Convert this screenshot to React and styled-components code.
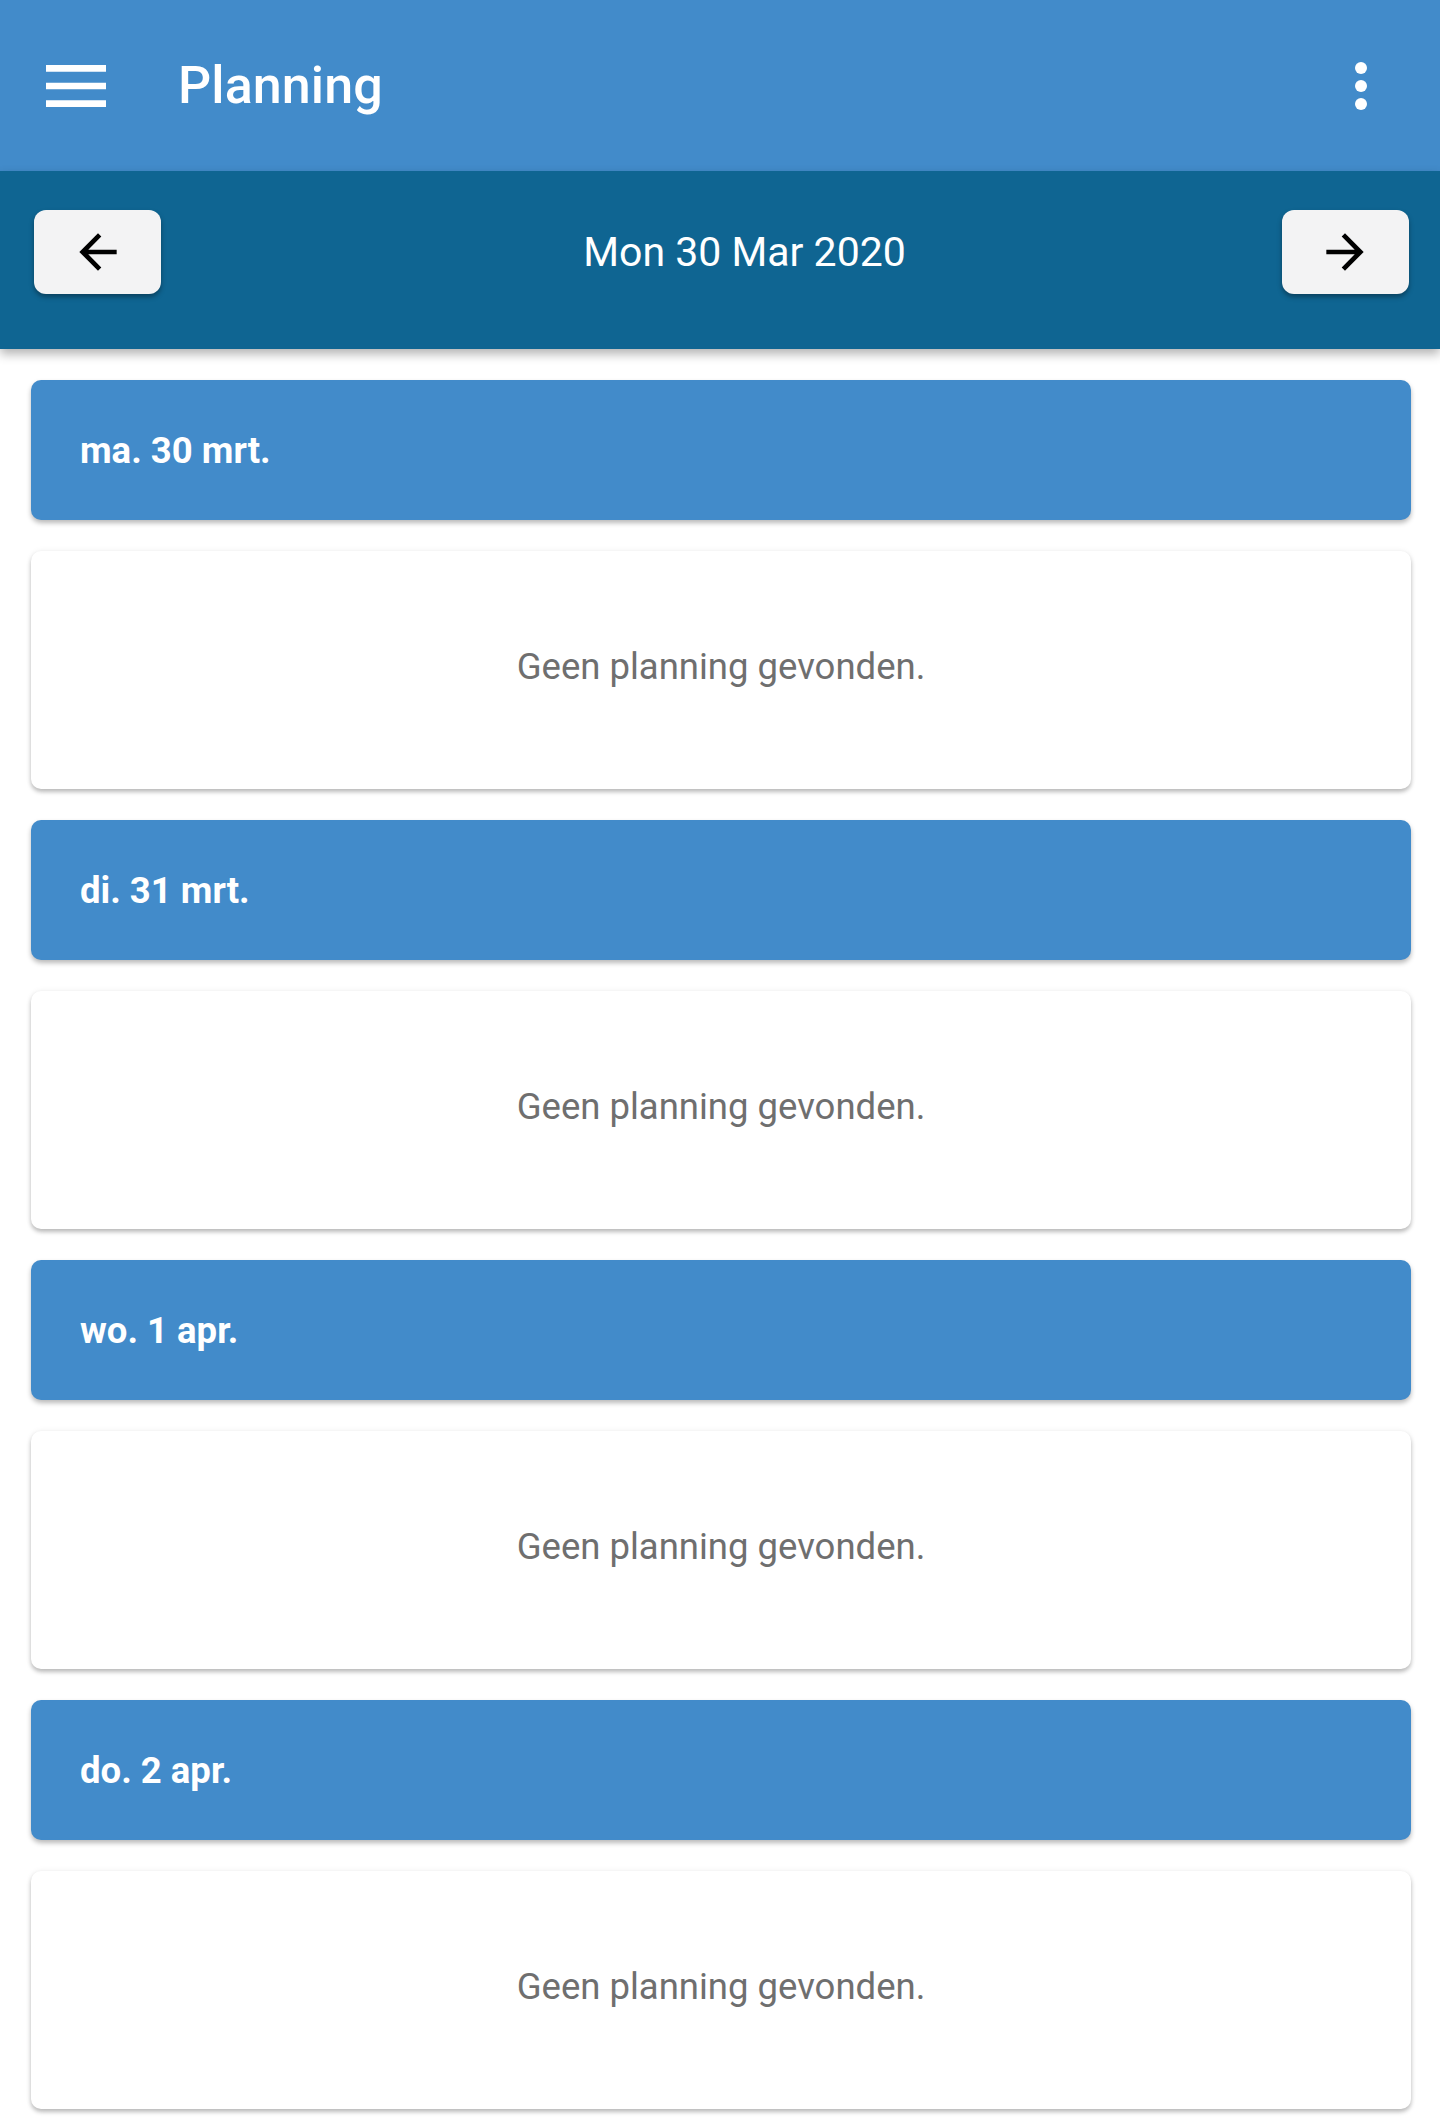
import React from "react";
import styled, { createGlobalStyle } from "styled-components";

const days = ["ma. 30 mrt.", "di. 31 mrt.", "wo. 1 apr.", "do. 2 apr."];

const App = () => {
  return (
    <>
      <Global />
      <Page>
        <TopBar>
          <IconButton aria-label="menu">
            <svg width="60" height="42" viewBox="0 0 18 12.6">
              <path d="M0 0h18v2H0zM0 5.3h18v2H0zM0 10.6h18v2H0z" fill="#fff" />
            </svg>
          </IconButton>
          <Title>Planning</Title>
          <Kebab aria-label="more">
            <Dot />
            <Dot />
            <Dot />
          </Kebab>
        </TopBar>
        <DateBar>
          <NavButton aria-label="previous">
            <svg width="56" height="56" viewBox="0 0 24 24">
              <path d="M20 11H7.83l5.59-5.59L12 4l-8 8 8 8 1.41-1.41L7.83 13H20v-2z" fill="#000" />
            </svg>
          </NavButton>
          <DateLabel>Mon 30 Mar 2020</DateLabel>
          <NavButton aria-label="next">
            <svg width="56" height="56" viewBox="0 0 24 24">
              <path d="M12 4l-1.41 1.41L16.17 11H4v2h12.17l-5.58 5.59L12 20l8-8z" fill="#000" />
            </svg>
          </NavButton>
        </DateBar>
        <List>
          {days.map((d) => (
            <React.Fragment key={d}>
              <DayHeader>{d}</DayHeader>
              <EmptyCard>Geen planning gevonden.</EmptyCard>
            </React.Fragment>
          ))}
        </List>
      </Page>
    </>
  );
};

const Global = createGlobalStyle`
  body {
    margin: 0;
    background: #fff;
    font-family: Roboto, "Noto Sans", sans-serif;
  }
`;

const Page = styled.div`
  width: 1440px;
  min-height: 2128px;
  background: #fff;
`;

const TopBar = styled.header`
  height: 171px;
  background: #428bca;
  display: flex;
  align-items: center;
  padding: 0 0 0 46px;
  box-sizing: border-box;
`;

const IconButton = styled.div`
  display: flex;
  align-items: center;
  width: 60px;
  height: 42px;
`;

const Title = styled.h1`
  margin: 0 0 0 72px;
  font-size: 52px;
  font-weight: 500;
  color: #fff;
  flex: 1;
  letter-spacing: 0.1px;
`;

const Kebab = styled.div`
  width: 80px;
  margin-right: 39px;
  display: flex;
  flex-direction: column;
  align-items: center;
  gap: 6px;
`;

const Dot = styled.span`
  width: 12px;
  height: 12px;
  border-radius: 50%;
  background: #fff;
`;

const DateBar = styled.div`
  height: 178px;
  background: #0f6592;
  display: flex;
  align-items: center;
  justify-content: space-between;
  padding: 0 31px 16px 34px;
  box-sizing: border-box;
  box-shadow: 0 5px 10px rgba(0, 0, 0, 0.3);
  position: relative;
`;

const NavButton = styled.div`
  width: 127px;
  height: 84px;
  border-radius: 12px;
  background: #f3f3f4;
  display: flex;
  align-items: center;
  justify-content: center;
  box-shadow: 0 3px 5px rgba(0, 0, 0, 0.35);
`;

const DateLabel = styled.div`
  color: #fff;
  font-size: 41px;
  font-weight: 400;
  margin-left: 46px;
`;

const List = styled.div`
  display: flex;
  flex-direction: column;
  gap: 31px;
  padding: 31px 29px 20px 31px;
`;

const DayHeader = styled.div`
  height: 140px;
  background: #428bca;
  border-radius: 10px;
  display: flex;
  align-items: center;
  padding-left: 49px;
  color: #fff;
  font-size: 36.5px;
  font-weight: 700;
  box-shadow: 0 3px 5px rgba(0, 0, 0, 0.28);
`;

const EmptyCard = styled.div`
  height: 238px;
  box-sizing: border-box;
  padding-bottom: 7px;
  background: #fff;
  border-radius: 10px;
  display: flex;
  align-items: center;
  justify-content: center;
  color: #6f6f6f;
  font-size: 36.5px;
  box-shadow: 0 3px 4px rgba(0, 0, 0, 0.25), 0 0 6px rgba(0, 0, 0, 0.06);
`;

export default App;
